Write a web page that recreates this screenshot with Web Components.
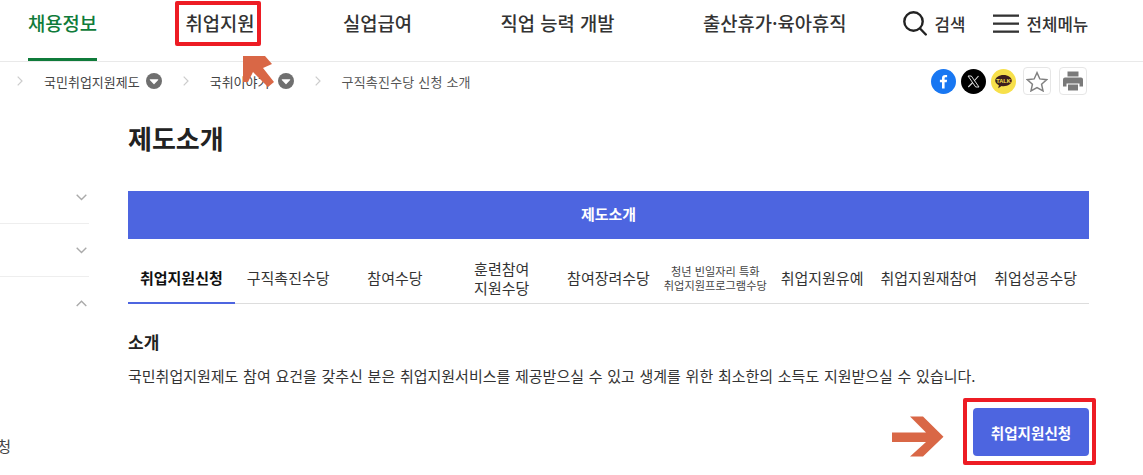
<!DOCTYPE html>
<html lang="ko">
<head>
<meta charset="utf-8">
<title>제도소개</title>
<style>
  html, body { margin: 0; padding: 0; background: #fff; }
  body {
    width: 1143px;
    height: 475px;
    overflow: hidden;
    position: relative;
    font-family: 'Noto Sans CJK KR', 'Noto Sans', sans-serif;
    color: #222;
  }
</style>
</head>
<body>
<site-header></site-header>
<bread-bar></bread-bar>
<div style="display:flex">
  <side-nav></side-nav>
  <main-panel></main-panel>
</div>
<mark-overlay></mark-overlay>

<script>
// header: top menu
class SiteHeader extends HTMLElement {
  constructor() {
    super();
    this.attachShadow({ mode: 'open' });
    const items = ['채용정보', '취업지원', '실업급여', '직업 능력 개발', '출산휴가·육아휴직'];
    this.shadowRoot.innerHTML = `
      <style>
        :host { display: flex; height: 61px; border-bottom: 1px solid #e9e9e9; padding-left: 28px; box-sizing: content-box; }
        nav { display: flex; gap: 88.5px; }
        a { display: block; height: 58px; line-height: 46px; font-size: 18.75px; font-weight: 500; color: #333; white-space: nowrap; }
        a.on { color: #0f7b3a; height: 58px; border-bottom: 3px solid #0f7b3a; }
        .tools { display: flex; margin-left: 56px; align-items: flex-start; }
        .tool { display: flex; align-items: center; gap: 8px; height: 47px; font-size: 16.8px; font-weight: 500; color: #333; white-space: nowrap; }
        .tool + .tool { margin-left: 27px; }
        svg { display: block; }
      </style>
      <nav>${items.map((t, i) => `<a class="${i === 0 ? 'on' : ''}">${t}</a>`).join('')}</nav>
      <div class="tools">
        <div class="tool">
          <svg width="24" height="25" viewBox="0 0 24 25" fill="none" stroke="#222" stroke-width="2.4" stroke-linecap="round"><circle cx="10.5" cy="10.5" r="9.2"/><line x1="17" y1="17.5" x2="22.8" y2="23.5"/></svg>
          <span>검색</span>
        </div>
        <div class="tool">
          <svg width="26" height="20" viewBox="0 0 26 20" fill="#333"><rect y="0.5" width="26" height="2.3"/><rect y="8.5" width="26" height="2.3"/><rect y="16.5" width="26" height="2.3"/></svg>
          <span>전체메뉴</span>
        </div>
      </div>`;
  }
}
customElements.define('site-header', SiteHeader);

// breadcrumb and share buttons
class BreadBar extends HTMLElement {
  constructor() {
    super();
    this.attachShadow({ mode: 'open' });
    const chev = `<svg class="chev" width="6" height="10" viewBox="0 0 6 10" fill="none" stroke="#ccc" stroke-width="1.2"><polyline points="0.7,0.7 5,5 0.7,9.3"/></svg>`;
    const drop = `<svg class="drop" width="16" height="16" viewBox="0 0 16 16"><circle cx="8" cy="8" r="8" fill="#6f6f6f"/><path d="M4.2 6.2h7.6a.5.5 0 0 1 .4.8L8.4 11a.5.5 0 0 1-.8 0L3.8 7a.5.5 0 0 1 .4-.8z" fill="#fff"/></svg>`;
    this.shadowRoot.innerHTML = `
      <style>
        :host { display: flex; align-items: center; height: 38px; padding-left: 17px; font-size: 13px; color: #444; }
        .crumb { display: flex; align-items: center; white-space: nowrap; }
        .chev { margin-right: 21px; }
        .c1 .drop { margin-left: 6px; }
        .c2 .drop { margin-left: 8px; }
        .c1 { margin-right: 21px; }
        .c2 { margin-right: 21px; }
        .c3 { color: #555; letter-spacing: 0.2px; }
        .share { margin-left: auto; margin-right: 56px; display: flex; align-items: center; gap: 5px; }
        .share svg { display: block; }
        .box { width: 28px; height: 28px; border: 1px solid #e6e6e6; border-radius: 4px; display: flex; align-items: center; justify-content: center; box-sizing: border-box; }
        .star { margin-left: 2px; }
        .print { margin-left: 3px; }
      </style>
      <div class="crumb c1">${chev}<span>국민취업지원제도</span>${drop}</div>
      <div class="crumb c2">${chev}<span>국취이야기</span>${drop}</div>
      <div class="crumb c3">${chev}<span>구직촉진수당 신청 소개</span></div>
      <div class="share">
        <svg width="25" height="25" viewBox="0 0 25 25"><circle cx="12.5" cy="12.5" r="12.5" fill="#1877f2"/><path d="M13.6 19.5v-6.2h2.1l.4-2.5h-2.5V9.4c0-.8.3-1.2 1.2-1.2h1.3V6c-.5-.1-1.2-.1-1.9-.1-2 0-3.2 1.2-3.2 3.2v1.7H8.9v2.5h2.1v6.2z" fill="#fff"/></svg>
        <svg width="25" height="25" viewBox="0 0 25 25"><circle cx="12.5" cy="12.5" r="12.5" fill="#000"/><path d="M7 7h3.3l7.7 11h-3.3z" fill="none" stroke="#ddd" stroke-width="1"/><path d="M17.5 7l-4.4 5M11.7 13.5L7.3 18" stroke="#ddd" stroke-width="1.1" fill="none"/></svg>
        <svg width="25" height="25" viewBox="0 0 25 25"><circle cx="12.5" cy="12.5" r="12.5" fill="#f7e04b"/><path d="M12.5 6c-4.6 0-8.3 2.5-8.3 5.6 0 2 1.5 3.7 3.7 4.7l-.7 3 3.4-2.3c.6.1 1.2.2 1.9.2 4.6 0 8.3-2.5 8.3-5.6S17.1 6 12.5 6z" fill="#3c1e1e"/><text x="12.5" y="13.8" text-anchor="middle" font-family="Liberation Sans, sans-serif" font-size="5.6" font-weight="700" fill="#f7e04b">TALK</text></svg>
        <div class="box star">
          <svg width="22" height="21" viewBox="0 0 24 23" fill="none" stroke="#808080" stroke-width="1.6" stroke-linejoin="miter"><path d="M12 1.8l3.1 6.9 7.4.8-5.5 5 1.6 7.3L12 18.1l-6.6 3.7L7 14.5l-5.5-5 7.4-.8z"/></svg>
        </div>
        <div class="box print">
          <svg width="20" height="20" viewBox="0 0 20 20" fill="#7a7a7a"><path d="M4.5 .5h11v5h-11z"/><path d="M2 6.5h16a2 2 0 0 1 2 2v7h-3.5v-3h-13v3H0v-7a2 2 0 0 1 2-2z"/><path d="M5 13.5h10v6H5z"/></svg>
        </div>
      </div>`;
  }
}
customElements.define('bread-bar', BreadBar);

// left menu, cut off by the window edge
class SideNav extends HTMLElement {
  constructor() {
    super();
    this.attachShadow({ mode: 'open' });
    const down = `<svg width="11" height="7" viewBox="0 0 11 7" fill="none" stroke="#aaa" stroke-width="1.4"><polyline points="0.7,0.8 5.5,5.5 10.3,0.8"/></svg>`;
    const up = `<svg width="11" height="7" viewBox="0 0 11 7" fill="none" stroke="#aaa" stroke-width="1.4"><polyline points="0.7,6 5.5,1.3 10.3,6"/></svg>`;
    this.shadowRoot.innerHTML = `
      <style>
        :host { display: block; width: 89px; flex: none; padding-top: 71px; font-size: 15px; color: #444; }
        .row { height: 52px; border-bottom: 1px solid #eee; display: flex; justify-content: flex-end; align-items: center; padding-right: 2px; }
        .row.open { border: 0; }
        .sub { margin-top: 107px; line-height: 20px; width: 11px; overflow: hidden; direction: rtl; white-space: nowrap; }
      </style>
      <div class="row">${down}</div>
      <div class="row">${down}</div>
      <div class="row open">${up}</div>
      <div class="sub">신청</div>`;
  }
}
customElements.define('side-nav', SideNav);

// tab strip under the blue bar
class TabStrip extends HTMLElement {
  constructor() {
    super();
    this.attachShadow({ mode: 'open' });
    const tabs = ['취업지원신청', '구직촉진수당', '참여수당', '훈련참여<br>지원수당', '참여장려수당', '<small>청년 빈일자리 특화<br>취업지원프로그램수당</small>', '취업지원유예', '취업지원재참여', '취업성공수당'];
    this.shadowRoot.innerHTML = `
      <style>
        :host { display: grid; grid-template-columns: repeat(9, 1fr); height: 64px; border-bottom: 1px solid #ddd; box-sizing: border-box; }
        div { display: flex; align-items: center; justify-content: center; text-align: center; padding-top: 12px; box-sizing: border-box; font-size: 15px; line-height: 19px; color: #333; white-space: nowrap; }
        div.on { font-weight: 700; color: #111; border-bottom: 2px solid #4d65e0; margin-bottom: -1px; }
        small { font-size: 11.2px; line-height: 14px; display: block; color: #444; }
      </style>
      ${tabs.map((t, i) => `<div class="${i === 0 ? 'on' : ''}">${t}</div>`).join('')}`;
  }
}
customElements.define('tab-strip', TabStrip);

// content column
class MainPanel extends HTMLElement {
  constructor() {
    super();
    this.attachShadow({ mode: 'open' });
    this.shadowRoot.innerHTML = `
      <style>
        :host { display: block; width: 961px; margin-left: 39px; flex: none; }
        h1 { margin: 16px 0 0; height: 75px; font-size: 26px; font-weight: 700; line-height: 44px; color: #222; }
        .bar { height: 48px; line-height: 46px; background: #4d65e0; color: #fff; font-size: 15px; font-weight: 700; text-align: center; }
        tab-strip { margin-top: 1px; }
        h2 { margin: 26px 0 0; font-size: 17px; font-weight: 700; line-height: 24px; color: #222; }
        p { margin: 10px 0 0; font-size: 15px; word-spacing: 0.5px; line-height: 24px; color: #333; white-space: nowrap; }
        .act { display: flex; justify-content: flex-end; margin-top: 20px; }
        button { width: 116px; height: 48px; border: 0; border-radius: 4px; background: #4d65e0; color: #fff; font: 700 14.6px 'Noto Sans CJK KR', sans-serif; }
      </style>
      <h1>제도소개</h1>
      <div class="bar">제도소개</div>
      <tab-strip></tab-strip>
      <h2>소개</h2>
      <p>국민취업지원제도 참여 요건을 갖추신 분은 취업지원서비스를 제공받으실 수 있고 생계를 위한 최소한의 소득도 지원받으실 수 있습니다.</p>
      <div class="act"><button>취업지원신청</button></div>`;
  }
}
customElements.define('main-panel', MainPanel);

// red boxes and orange arrows drawn on top of the screenshot
class MarkOverlay extends HTMLElement {
  constructor() {
    super();
    this.attachShadow({ mode: 'open' });
    this.shadowRoot.innerHTML = `
      <style>
        :host { position: absolute; inset: 0; pointer-events: none; display: block; }
        .box { position: absolute; border: 4px solid #ed1c24; border-radius: 2px; box-sizing: border-box; }
        svg { position: absolute; left: 0; top: 0; }
      </style>
      <div class="box" style="left:175px;top:1px;width:86px;height:45px"></div>
      <div class="box" style="left:963px;top:398px;width:133px;height:67px"></div>
      <svg width="1143" height="475" viewBox="0 0 1143 475" fill="#d96746">
        <polygon points="243,56 265,56 272,64 263,68 274,82 268,87 253,72 248,82 243,82"/>
        <polygon points="892,432.5 926,432.5 910,416.5 923,416.5 943.5,436.8 923,456.5 910,456.5 926,442 892,442"/>
      </svg>`;
  }
}
customElements.define('mark-overlay', MarkOverlay);
</script>
</body>
</html>
